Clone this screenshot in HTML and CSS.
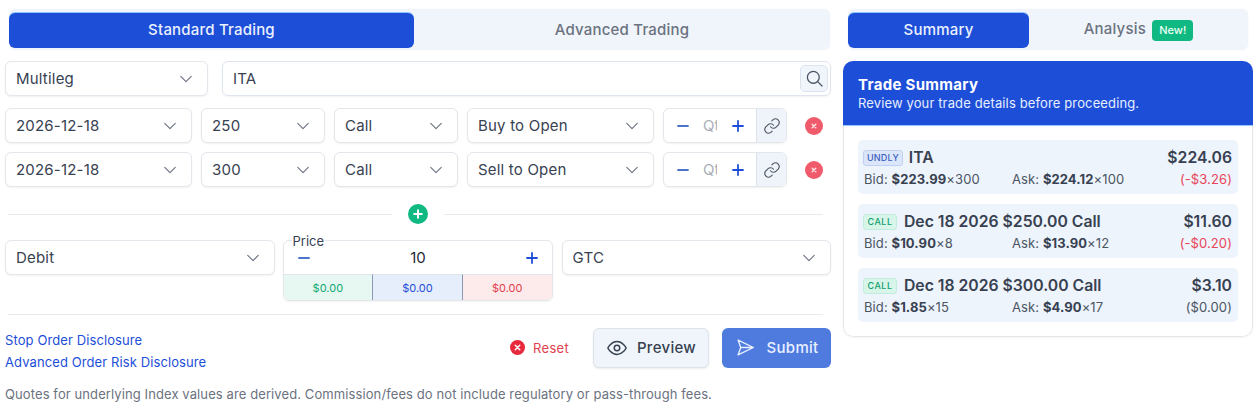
FILE: index.html
```html
<!DOCTYPE html>
<html lang="en">
<head>
<meta charset="utf-8">
<title>Trade</title>
<link rel="stylesheet" href="styles.css">
</head>
<body>
<svg class="defs" width="0" height="0" aria-hidden="true">
  <symbol id="chev" viewBox="0 0 16 16"><path d="M2 5l6 6 6-6" fill="none" stroke="currentColor" stroke-width="1.3" stroke-linecap="round" stroke-linejoin="round"/></symbol>
  <symbol id="link" viewBox="0 0 24 24"><path d="M10 13a5 5 0 0 0 7.5.5l3-3a5 5 0 0 0-7-7l-1.7 1.7M14 11a5 5 0 0 0-7.5-.5l-3 3a5 5 0 0 0 7 7l1.7-1.7" fill="none" stroke="currentColor" stroke-width="1.5" stroke-linecap="round" stroke-linejoin="round"/></symbol>
  <symbol id="xc" viewBox="0 0 16 16"><circle cx="8" cy="8" r="8" fill="currentColor"/><path d="M5.6 5.6l4.8 4.8M10.4 5.6l-4.8 4.8" stroke="#fff" stroke-width="1.6" stroke-linecap="round"/></symbol>
  <symbol id="xs" viewBox="0 0 16 16"><circle cx="8" cy="8" r="8" fill="currentColor"/><path d="M6.4 6.4l3.2 3.2M9.6 6.4l-3.2 3.2" stroke="#fde2e5" stroke-width="1.3" stroke-linecap="round"/></symbol>
  <symbol id="minus" viewBox="0 0 12 12"><path d="M1 6h10" fill="none" stroke="currentColor" stroke-width="1.8" stroke-linecap="round"/></symbol>
  <symbol id="plus" viewBox="0 0 12 12"><path d="M1 6h10M6 1v10" fill="none" stroke="currentColor" stroke-width="1.8" stroke-linecap="round"/></symbol>
</svg>
<main class="page">
  <section class="left">
    <div class="tabs tabs-left">
      <button class="tab active">Standard Trading</button>
      <button class="tab">Advanced Trading</button>
    </div>
    <div class="row row-symbol">
      <div class="select w-type"><span>Multileg</span><svg class="chev"><use href="#chev"/></svg></div>
      <div class="symbol">
        <input class="symbol-input" value="ITA" aria-label="Symbol">
        <button class="search" aria-label="Search"><svg viewBox="0 0 24 24" width="19" height="19"><circle cx="10.5" cy="10.5" r="7.5" fill="none" stroke="currentColor" stroke-width="1.6"/><path d="M16 16l5.5 5.5" stroke="currentColor" stroke-width="1.6" stroke-linecap="round"/></svg></button>
      </div>
    </div>
    <div class="legs">
      <div class="row leg">
        <div class="select w-date"><span>2026-12-18</span><svg class="chev"><use href="#chev"/></svg></div>
        <div class="select w-small"><span>250</span><svg class="chev"><use href="#chev"/></svg></div>
        <div class="select w-small"><span>Call</span><svg class="chev"><use href="#chev"/></svg></div>
        <div class="select w-side"><span>Buy to Open</span><svg class="chev"><use href="#chev"/></svg></div>
        <div class="qty">
          <svg class="step minus"><use href="#minus"/></svg><input class="qty-input" placeholder="Qty" aria-label="Quantity"><svg class="step plus"><use href="#plus"/></svg>
          <span class="qty-link"><svg><use href="#link"/></svg></span>
        </div>
        <svg class="remove"><use href="#xs"/></svg>
      </div>
      <div class="row leg">
        <div class="select w-date"><span>2026-12-18</span><svg class="chev"><use href="#chev"/></svg></div>
        <div class="select w-small"><span>300</span><svg class="chev"><use href="#chev"/></svg></div>
        <div class="select w-small"><span>Call</span><svg class="chev"><use href="#chev"/></svg></div>
        <div class="select w-side"><span>Sell to Open</span><svg class="chev"><use href="#chev"/></svg></div>
        <div class="qty">
          <svg class="step minus"><use href="#minus"/></svg><input class="qty-input" placeholder="Qty" aria-label="Quantity"><svg class="step plus"><use href="#plus"/></svg>
          <span class="qty-link"><svg><use href="#link"/></svg></span>
        </div>
        <svg class="remove"><use href="#xs"/></svg>
      </div>
    </div>
    <div class="add-divider">
      <hr class="rule rule-a">
      <span class="add"><svg viewBox="0 0 20 20" width="20" height="20"><circle cx="10" cy="10" r="10" fill="#10b981"/><path d="M10 6.2v7.6M6.2 10h7.6" stroke="#fff" stroke-width="2" stroke-linecap="round"/></svg></span>
      <hr class="rule">
    </div>
    <div class="row order">
      <div class="select w-third"><span>Debit</span><svg class="chev"><use href="#chev"/></svg></div>
      <div class="price">
        <span class="price-label">Price</span>
        <div class="price-main"><svg class="step minus"><use href="#minus"/></svg><span class="price-value">10</span><svg class="step plus"><use href="#plus"/></svg></div>
        <div class="price-quotes"><span class="pq bid">$0.00</span><span class="pq mid">$0.00</span><span class="pq ask">$0.00</span></div>
      </div>
      <div class="select w-third"><span>GTC</span><svg class="chev"><use href="#chev"/></svg></div>
    </div>
    <hr class="rule full">
    <div class="actions">
      <div class="links">
        <a href="#">Stop Order Disclosure</a>
        <a href="#">Advanced Order Risk Disclosure</a>
      </div>
      <button class="reset"><svg><use href="#xc"/></svg>Reset</button>
      <button class="btn preview"><svg viewBox="0 0 24 24" width="22" height="22"><path d="M2 12s3.6-7 10-7 10 7 10 7-3.6 7-10 7-10-7-10-7z" fill="none" stroke="currentColor" stroke-width="1.6" stroke-linejoin="round"/><circle cx="12" cy="12" r="3" fill="none" stroke="currentColor" stroke-width="1.6"/></svg>Preview</button>
      <button class="btn submit"><svg viewBox="0 0 24 24" width="21" height="21"><path d="M3.5 3.5L21 12 3.5 20.5 6.5 12zM6.5 12H21" fill="none" stroke="currentColor" stroke-width="1.5" stroke-linejoin="round" stroke-linecap="round"/></svg>Submit</button>
    </div>
    <p class="note">Quotes for underlying Index values are derived. Commission/fees do not include regulatory or pass-through fees.</p>
  </section>
  <aside class="right">
    <div class="tabs tabs-right">
      <button class="tab active">Summary</button>
      <button class="tab">Analysis <span class="new">New!</span></button>
    </div>
    <div class="card">
      <header class="card-head">
        <h2>Trade Summary</h2>
        <p>Review your trade details before proceeding.</p>
      </header>
      <div class="card-body">
        <article class="item">
          <div class="item-top"><span class="tag undly">UNDLY</span><strong class="name">ITA</strong><strong class="last">$224.06</strong></div>
          <div class="item-sub"><span class="q">Bid: <b>$223.99</b>×300</span><span class="q">Ask: <b>$224.12</b>×100</span><span class="chg neg">(-$3.26)</span></div>
        </article>
        <article class="item">
          <div class="item-top"><span class="tag call">CALL</span><strong class="name">Dec 18 2026 $250.00 Call</strong><strong class="last">$11.60</strong></div>
          <div class="item-sub"><span class="q">Bid: <b>$10.90</b>×8</span><span class="q">Ask: <b>$13.90</b>×12</span><span class="chg neg">(-$0.20)</span></div>
        </article>
        <article class="item">
          <div class="item-top"><span class="tag call">CALL</span><strong class="name">Dec 18 2026 $300.00 Call</strong><strong class="last">$3.10</strong></div>
          <div class="item-sub"><span class="q">Bid: <b>$1.85</b>×15</span><span class="q">Ask: <b>$4.90</b>×17</span><span class="chg">($0.00)</span></div>
        </article>
      </div>
    </div>
  </aside>
</main>
</body>
</html>
```
FILE: styles.css
```css
* { box-sizing: border-box; }
html, body { margin: 0; padding: 0; background: #fff; }
body { font-family: Inter, "Liberation Sans", sans-serif; color: #374151; font-size: 15px; width: 1259px; height: 415px; overflow: hidden; }
.defs { position: absolute; }
button, input { font: inherit; color: inherit; }
.page { display: flex; gap: 12px; padding: 9px 6px 0 5px; }
.left { width: 826px; flex: none; }
.right { width: 410px; flex: none; }

.tabs { display: flex; background: #eff5fb; border-radius: 6px; height: 41px; padding-top: 4px; box-shadow: 0 0 2px rgba(0,0,0,.05); }
.tabs-left { margin: 0 1px 0 4px; }
.tabs-right { margin: 0 5px; }
.tab { flex: 1; height: 35px; border: 0; background: transparent; border-radius: 6px; color: #6b7280; font-weight: 500; font-size: 15px; letter-spacing: .2px; padding: 0 0 2px; }
.tab.active { background: #1d4ed8; color: #eaf1ff; box-shadow: 0 -1px 0 #93c5fd; }
.tabs-left .tab.active { flex: 0 0 405px; }
.tabs-right .tab.active { flex: 0 0 181px; }
.new { display: inline-block; background: #10b981; color: #eafff6; font-size: 11px; line-height: 21px; height: 21px; padding: 0 7px; border-radius: 4px; margin-left: 2px; letter-spacing: 0; }

.row { display: flex; align-items: flex-start; }
.row-symbol { gap: 14px; margin-top: 11px; }
.legs { display: flex; flex-direction: column; gap: 9px; margin-top: 12px; }
.leg { gap: 9px; align-items: center; }
.select { height: 35px; display: flex; align-items: center; justify-content: space-between; background: #fff; border: 1px solid #e3e6eb; border-radius: 6px; padding: 0 14px 0 10px; box-shadow: 0 1px 2px rgba(0,0,0,.06); letter-spacing: .2px; color: #374151; }
.chev { width: 14px; height: 14px; color: #6b7280; flex: none; }
.w-type { width: 203px; }
.w-date { width: 187px; }
.w-small { width: 124px; }
.w-side { width: 187px; }
.w-third { flex: 1; }
.symbol { flex: 1; height: 35px; display: flex; align-items: center; border: 1px solid #dfe5ee; border-radius: 6px; padding: 0 2px 0 10px; box-shadow: 0 1px 2px rgba(0,0,0,.05); }
.symbol-input { flex: 1; min-width: 0; border: 0; outline: 0; background: transparent; letter-spacing: .2px; padding: 0; color: #374151; }
.search { width: 28px; height: 27px; border: 1px solid #dbe4ee; border-radius: 5px; background: #eff5fb; display: flex; align-items: center; justify-content: center; padding: 0; color: #4b5563; }

.qty { width: 124px; height: 35px; display: flex; align-items: center; border: 1px solid #e3e6eb; border-radius: 6px; box-shadow: 0 1px 2px rgba(0,0,0,.06); overflow: hidden; }
.step { width: 12px; height: 12px; color: #1d4ed8; flex: none; }
.qty .minus { margin-left: 13px; color: #4b73c9; }
.qty-input { width: 14px; margin: 0 15px 0 14px; border: 0; outline: 0; padding: 0; background: transparent; font-size: 15px; flex: none; }
.qty-input::placeholder { color: #a9afb9; opacity: 1; }
.qty-link { margin-left: auto; width: 30px; height: 100%; background: #eff4fa; border-left: 1px solid #dbe2ea; display: flex; align-items: center; justify-content: center; color: #4b5563; }
.qty-link svg { width: 18px; height: 18px; }
.remove { width: 18px; height: 18px; color: #ef5b6b; margin-left: 9px; flex: none; }

.rule { border: 0; height: 1px; background: #e8eaed; margin: 0; flex: 1; }
.rule-a { flex: 0 0 384px; }
.add-divider { display: flex; align-items: center; gap: 16px; margin: 17px 8px 16px 3px; height: 20px; }
.add { display: flex; }

.order { gap: 8px; height: 61px; }
.price { position: relative; width: 270px; height: 61px; flex: none; margin-right: 1px; border: 1px solid #e3e6eb; border-radius: 6px; box-shadow: 0 1px 2px rgba(0,0,0,.05); }
.price-label { position: absolute; left: 8px; top: -8px; background: #fff; font-size: 13px; line-height: 16px; padding: 0 1px; color: #374151; }
.price-main { height: 33px; display: flex; align-items: center; padding: 0 13px 0 14px; justify-content: space-between; font-size: 15px; }
.price-value { color: #1f2937; }
.price .minus { color: #4b73c9; }
.price-quotes { display: flex; height: 26px; }
.pq { flex: 1; font-size: 11px; display: flex; align-items: center; justify-content: center; border-top: 1px solid #dfe5ea; }
.bid { background: #e6f8f1; color: #10a874; border-bottom-left-radius: 5px; }
.mid { background: #e6edfb; color: #1d4ed8; border-left: 1px solid #8a97b5; border-right: 1px solid #8a97b5; }
.ask { background: #fdeaea; color: #e0414f; border-bottom-right-radius: 5px; }

.full { margin: 13px 8px 0 3px; display: block; }
.actions { display: flex; align-items: center; margin-top: 12px; height: 41px; }
.links { display: flex; flex-direction: column; gap: 5px; flex: 1; font-size: 13px; line-height: 17px; margin-top: 7px; }
.links a { color: #1d4ed8; text-decoration: none; letter-spacing: .1px; }
.reset { display: flex; align-items: center; gap: 8px; border: 0; background: transparent; color: #e0414f; font-size: 13px; letter-spacing: .3px; padding: 0; margin-right: 24px; }
.reset svg { width: 15px; height: 15px; color: #e8293c; }
.btn { height: 40px; border-radius: 6px; display: flex; align-items: center; justify-content: center; gap: 9px; font-weight: 500; letter-spacing: .3px; padding: 0; }
.preview { width: 116px; background: #eff5fb; border: 1px solid #dde3ea; color: #374151; margin-right: 13px; box-shadow: 0 1px 2px rgba(0,0,0,.08); }
.submit { width: 109px; background: #4f7bdf; border: 0; color: #e9f0ff; gap: 11px; }
.note { margin: 18px 0 0; font-size: 13px; line-height: 16px; color: #6b7280; letter-spacing: .1px; }

.card { margin-top: 11px; border-radius: 10px; overflow: hidden; height: 276px; box-shadow: 0 1px 2px rgba(0,0,0,.05); }
.card-head { background: #1d4ed8; color: #fff; height: 65px; padding: 15px 15px 0; border-bottom: 1px solid #93c5fd; }
.card-head h2 { margin: 0; font-size: 15px; line-height: 18px; font-weight: 700; letter-spacing: .3px; }
.card-head p { margin: 1px 0 0; font-size: 13px; line-height: 16px; letter-spacing: .13px; color: #e6eeff; }
.card-body { height: 211px; padding: 14px 14px 0; display: flex; flex-direction: column; gap: 10px; border: 1px solid #e5e7eb; border-top: 0; border-radius: 0 0 10px 10px; }
.item { height: 54px; background: #eef4fb; border-radius: 5px; padding: 7px 6px 0 5px; }
.item-top { display: flex; align-items: center; height: 21px; gap: 6px; }
.tag { font-size: 9px; line-height: 14px; height: 16px; padding: 0 3px; border-radius: 3px; letter-spacing: .2px; font-weight: 500; flex: none; border: 1px solid; }
.undly { background: #dbe6fb; color: #3b5fc0; border-color: #c0d0ee; }
.call { background: #d8f5e9; color: #0f9f6e; border-color: #c3ecdc; width: 34px; margin-right: 1px; text-align: center; letter-spacing: .5px; padding: 0; }
.name { font-size: 15.75px; font-weight: 600; color: #374151; }
.last { margin-left: auto; font-size: 15.75px; font-weight: 600; color: #374151; }
.item-sub { display: flex; margin-top: 3px; padding-left: 1px; font-size: 13px; line-height: 17px; color: #4b5563; letter-spacing: .1px; }
.q { width: 148px; }
.q b { font-weight: 700; color: #374151; }
.chg { margin-left: auto; }
.neg { color: #e8455a; }
```
